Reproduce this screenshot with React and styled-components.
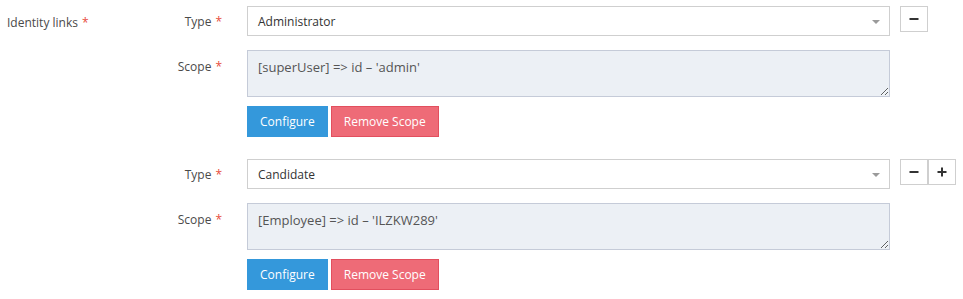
import React from "react";
import styled, { createGlobalStyle } from "styled-components";

const Global = createGlobalStyle`
  html, body { margin: 0; padding: 0; background: #fff; }
  body { font-family: "Open Sans", "Liberation Sans", sans-serif; font-size: 12px; color: #4a4a4a; }
  * { box-sizing: border-box; }
`;

const Page = styled.div`
  display: flex;
  padding: 6px 7px;
`;

const MainLabel = styled.div`
  width: 150px;
  flex: none;
  height: 30px;
  padding-top: 2px;
  display: flex;
  align-items: center;
  color: #4a4a4a;
`;

const Groups = styled.div`
  display: flex;
  flex-direction: column;
  gap: 22px;
`;

const Group = styled.div`
  display: grid;
  grid-template-columns: 80px 643px auto;
  column-gap: 10px;
  row-gap: 14px;
`;

const FieldLabel = styled.div`
  padding-right: 15px;
  text-align: right;
  color: #4a4a4a;
  line-height: 16px;
  padding-top: ${(p) => p.$pt}px;
`;

const Star = styled.span`
  color: #e74c3c;
  margin-left: 4px;
`;

const SelectBox = styled.div`
  position: relative;
  height: 30px;
  border: 1px solid #cfcfcf;
  background: #fff;
  display: flex;
  align-items: center;
  padding: 0 10px;
  color: #333;
`;

const Caret = styled.span`
  position: absolute;
  right: 9px;
  top: 13px;
  width: 0;
  height: 0;
  border-left: 4px solid transparent;
  border-right: 4px solid transparent;
  border-top: 4px solid #9a9a9a;
`;

const Area = styled.textarea`
  display: block;
  width: 100%;
  height: 47px;
  margin: 0;
  border: 1px solid #c5cbd8;
  background: #ecf0f5;
  padding: 7px 10px;
  font-family: "Open Sans", "Liberation Sans", sans-serif;
  font-size: 13px;
  line-height: 18px;
  color: #555;
  resize: vertical;
  outline: none;
`;

const Actions = styled.div`
  display: flex;
  align-items: flex-start;
`;

const IconBtn = styled.button`
  width: 28px;
  height: 26px;
  border: 1px solid #cfcfcf;
  background: #fff;
  padding: 0;
  display: flex;
  align-items: center;
  justify-content: center;
  cursor: pointer;
`;

const Buttons = styled.div`
  grid-column: 2;
  display: flex;
  gap: 3px;
  margin-top: -5px;
`;

const Btn = styled.button`
  height: 31px;
  padding: 0 12px;
  border: 1px solid ${(p) => (p.$danger ? "#e24f5e" : "#3498db")};
  background: ${(p) => (p.$danger ? "#ee6b77" : "#3498db")};
  color: #fff;
  font-family: "Open Sans", "Liberation Sans", sans-serif;
  font-size: 12px;
  cursor: pointer;
`;

const Minus = () => (
  <svg width="10" height="10" viewBox="0 0 10 10">
    <rect x="0.5" y="4" width="9" height="2" fill="#333" />
  </svg>
);
const Plus = () => (
  <svg width="10" height="10" viewBox="0 0 10 10">
    <rect x="0.5" y="4" width="9" height="2" fill="#333" />
    <rect x="4" y="0.5" width="2" height="9" fill="#333" />
  </svg>
);

const items = [
  { type: "Administrator", scope: "[superUser] => id \u2013 'admin'", plus: false },
  { type: "Candidate", scope: "[Employee] => id \u2013 'ILZKW289'", plus: true },
];

export default function App() {
  return (
    <>
      <Global />
      <Page>
        <MainLabel>
          Identity links<Star>*</Star>
        </MainLabel>
        <Groups>
          {items.map((it, i) => (
            <Group key={i}>
              <FieldLabel $pt={8}>
                Type<Star>*</Star>
              </FieldLabel>
              <SelectBox>
                {it.type}
                <Caret />
              </SelectBox>
              <Actions>
                <IconBtn><Minus /></IconBtn>
                {it.plus && <IconBtn><Plus /></IconBtn>}
              </Actions>
              <FieldLabel $pt={9}>
                Scope<Star>*</Star>
              </FieldLabel>
              <Area defaultValue={it.scope} />
              <div />
              <Buttons>
                <Btn>Configure</Btn>
                <Btn $danger>Remove Scope</Btn>
              </Buttons>
            </Group>
          ))}
        </Groups>
      </Page>
    </>
  );
}
